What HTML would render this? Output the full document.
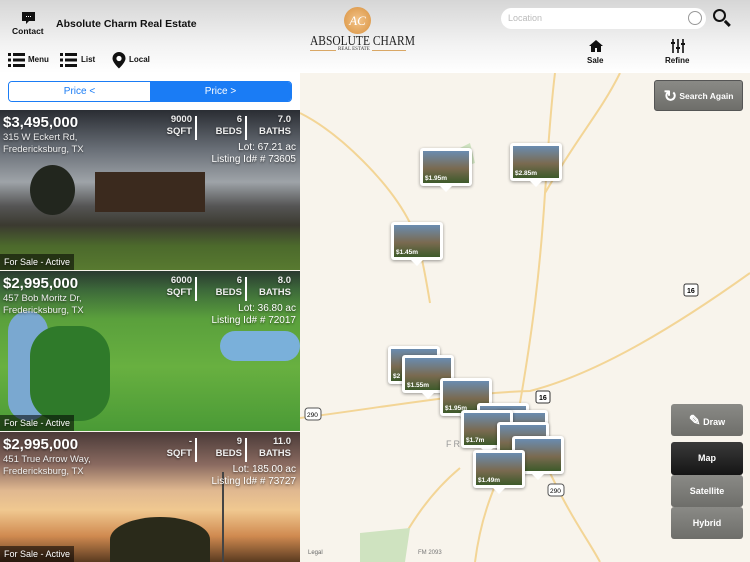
<!DOCTYPE html>
<html><head><meta charset="utf-8"><style>
*{margin:0;padding:0;box-sizing:border-box}
body{width:750px;height:562px;overflow:hidden;position:relative;font-family:"Liberation Sans",sans-serif;background:#f8f4ec}
.hdr{position:absolute;left:0;top:0;width:750px;height:73px;background:linear-gradient(#d6d6d6,#f2f2f2 60%,#fff)}
.lp{position:absolute;left:0;top:73px;width:300px;height:37px;background:#fff}
.b{font-weight:bold;color:#111}
.seg{position:absolute;left:8px;top:81px;width:284px;height:21px;border:1px solid #1a7cf5;border-radius:4px;overflow:hidden;display:flex;font-size:10px}
.seg div{flex:1;text-align:center;line-height:19px}
.card{position:absolute;left:0;width:300px;color:#fff;overflow:hidden;text-shadow:0 1px 2px rgba(0,0,0,.6)}
.price{position:absolute;left:3px;top:4px;font-size:15px;font-weight:bold}
.addr{position:absolute;left:3px;top:22px;font-size:9.5px;line-height:12px;color:#eee}
.st{position:absolute;top:4px;font-size:9.5px;font-weight:bold;text-align:right;line-height:12px;color:#eee}
.sep{position:absolute;top:6px;width:2px;height:24px;background:#fff}
.lot{position:absolute;right:4px;top:32px;font-size:10px;text-align:right;line-height:12px}
.tag{position:absolute;left:0;bottom:0;background:rgba(0,0,0,.55);font-size:9px;padding:3px 4px;color:#fff}
.pin{position:absolute;width:52px;height:38px;background:#fff;border-radius:3px;box-shadow:0 1px 3px rgba(0,0,0,.4);padding:3px}
.pin i{display:block;width:46px;height:32px;background:linear-gradient(#6a8cb0,#7a6a50 55%,#3d5a2a);position:relative;font-style:normal}
.pin b{position:absolute;left:2px;bottom:1px;font-size:6.5px;color:#fff}
.pin:after{content:"";position:absolute;left:20px;bottom:-6px;border:6px solid transparent;border-top-color:#fff;border-bottom:0}
.btn{position:absolute;left:671px;width:72px;background:linear-gradient(#8a8a86,#6e6e6a);color:#fff;font-size:9px;font-weight:bold;text-align:center;border-radius:3px}
.lbl{position:absolute;font-size:8px;font-weight:bold;color:#111}
</style></head><body>
<svg style="position:absolute;left:300px;top:73px" width="450" height="489">
<g fill="none" stroke="#f3d596" stroke-width="2">
<path d="M255 0 C250 40 248 80 245 120 C240 200 232 260 220 330"/>
<path d="M0 345 C80 335 160 320 230 318 C300 300 380 250 450 200"/>
<path d="M0 40 C40 60 90 110 110 150 C120 170 125 200 130 230"/>
<path d="M220 330 C225 360 240 380 250 400 L260 420 C275 450 290 470 300 489"/>
<path d="M210 380 C190 420 180 450 175 489"/>
<path d="M90 489 C110 450 130 420 160 395"/>
<path d="M320 0 C300 40 280 60 245 120"/>
</g>
<path d="M150 80 L170 70 L175 90 L160 95Z" fill="#cfe3c0"/>
<path d="M60 460 L110 455 L105 489 L60 489Z" fill="#cfe3c0"/>
<text x="146" y="374" font-size="9" fill="#999" font-family="Liberation Sans" letter-spacing="2">FRE</text>
<text x="118" y="481" font-size="6" fill="#777" font-family="Liberation Sans">FM 2093</text>
<text x="8" y="481" font-size="6" fill="#666" font-family="Liberation Sans">Legal</text>
<rect x="384" y="211" width="14" height="12" rx="2" fill="#fff" stroke="#333"/><text x="387" y="220" font-size="7" font-weight="bold" font-family="Liberation Sans">16</text>
<rect x="236" y="318" width="14" height="12" rx="2" fill="#fff" stroke="#333"/><text x="239" y="327" font-size="7" font-weight="bold" font-family="Liberation Sans">16</text>
<rect x="5" y="335" width="16" height="12" rx="3" fill="#fff" stroke="#555"/><text x="7" y="344" font-size="6.5" font-family="Liberation Sans">290</text>
<rect x="248" y="411" width="16" height="12" rx="3" fill="#fff" stroke="#555"/><text x="250" y="420" font-size="6.5" font-family="Liberation Sans">290</text>
</svg>
<div class="hdr"></div>
<div class="lp"></div>
<svg style="position:absolute;left:21px;top:11px" width="16" height="14"><path d="M1 1h13v9H8l-3 3v-3H1z" fill="#111"/><path d="M5 5.5h1M7 5.5h1M9 5.5h1" stroke="#fff"/></svg>
<div class="b" style="position:absolute;left:12px;top:26px;font-size:8.5px">Contact</div>
<div class="b" style="position:absolute;left:56px;top:18px;font-size:10.5px">Absolute Charm Real Estate</div>
<svg style="position:absolute;left:7px;top:51px" width="120" height="18">
<g fill="#111"><rect x="1" y="2" width="3" height="3"/><rect x="6" y="2" width="12" height="3"/><rect x="1" y="7.5" width="3" height="3"/><rect x="6" y="7.5" width="12" height="3"/><rect x="1" y="13" width="3" height="3"/><rect x="6" y="13" width="12" height="3"/>
<rect x="53" y="2" width="3" height="3"/><rect x="58" y="2" width="12" height="3"/><rect x="53" y="7.5" width="3" height="3"/><rect x="58" y="7.5" width="12" height="3"/><rect x="53" y="13" width="3" height="3"/><rect x="58" y="13" width="12" height="3"/>
<path d="M112 1a6.5 6.5 0 0 1 6.5 6.5c0 4-6.5 10-6.5 10s-6.5-6-6.5-10A6.5 6.5 0 0 1 112 1z"/></g>
<circle cx="112" cy="7.5" r="2.6" fill="#fff"/></svg>
<div class="lbl" style="left:28px;top:55px">Menu</div>
<div class="lbl" style="left:81px;top:55px">List</div>
<div class="lbl" style="left:129px;top:55px">Local</div>
<div style="position:absolute;left:344px;top:7px;width:27px;height:27px;border-radius:50%;background:radial-gradient(#f3c48a,#d8913e);color:#fff;font:italic 13px 'Liberation Serif',serif;text-align:center;line-height:27px">AC</div>
<div style="position:absolute;left:310px;top:34px;font:14px 'Liberation Serif',serif;color:#222;transform:scaleX(0.82);transform-origin:left">ABSOLUTE CHARM</div>
<div style="position:absolute;left:310px;top:50px;width:96px;height:1px;background:#d9a765"></div>
<div style="position:absolute;left:336px;top:47px;font:5px 'Liberation Serif',serif;color:#333;background:#f6f6f6;padding:0 2px">REAL ESTATE</div>
<div style="position:absolute;left:501px;top:8px;width:205px;height:21px;background:#fff;border-radius:11px;font-size:9px;color:#bbb;padding:5px 7px">Location<span style="position:absolute;right:4px;top:3px;width:14px;height:14px;border:1.5px solid #999;border-radius:50%"></span></div>
<div style="position:absolute;left:713px;top:9px;width:13px;height:13px;border:2px solid #111;border-radius:50%"></div>
<div style="position:absolute;left:724px;top:22px;width:7px;height:2.5px;background:#111;transform:rotate(45deg)"></div>
<svg style="position:absolute;left:589px;top:40px" width="14" height="12"><path d="M7 0L0 6h2v6h4V8h2v4h4V6h2z" fill="#111"/></svg>
<div class="lbl" style="left:587px;top:56px">Sale</div>
<svg style="position:absolute;left:670px;top:39px" width="16" height="14" stroke="#111" stroke-width="1.6"><path d="M3 0v14M8 0v14M13 0v14"/><path d="M1 4h4M6 9h4M11 5h4" stroke-width="2"/></svg>
<div class="lbl" style="left:665px;top:56px">Refine</div>
<div class="seg"><div style="background:#fff;color:#1a7cf5">Price &lt;</div><div style="background:#1a7cf5;color:#fff">Price &gt;</div></div>

<div class="card" style="top:110px;height:160px;background:linear-gradient(#2a2d33,#6a7078 25%,#9ea3a8 45%,#555 60%,#3b3a30 72%,#4c6a2c 85%,#587a30)">
<div style="position:absolute;left:95px;top:62px;width:110px;height:40px;background:#3b2a1e"></div>
<div style="position:absolute;left:30px;top:55px;width:45px;height:50px;border-radius:50%;background:#22261e"></div>
<div class="price">$3,495,000</div><div class="addr">315 W Eckert Rd,<br>Fredericksburg, TX</div>
<div class="st" style="left:160px;width:32px">9000<br>SQFT</div><div class="sep" style="left:195px"></div>
<div class="st" style="left:210px;width:32px">6<br>BEDS</div><div class="sep" style="left:245px"></div>
<div class="st" style="left:255px;width:36px">7.0<br>BATHS</div>
<div class="lot">Lot: 67.21 ac<br>Listing Id# # 73605</div>
<div class="tag">For Sale - Active</div></div>

<div class="card" style="top:271px;height:160px;background:linear-gradient(#2a3a30,#3d6a3a 12%,#5aa03c 30%,#68b040 60%,#4a9a36)">
<div style="position:absolute;left:8px;top:40px;width:40px;height:110px;background:#7aa8d0;border-radius:20px"></div>
<div style="position:absolute;left:30px;top:55px;width:80px;height:95px;background:#2f7a2a;border-radius:30px"></div>
<div style="position:absolute;left:220px;top:60px;width:80px;height:30px;background:#7ab0da;border-radius:15px"></div>
<div class="price">$2,995,000</div><div class="addr">457 Bob Moritz Dr,<br>Fredericksburg, TX</div>
<div class="st" style="left:160px;width:32px">6000<br>SQFT</div><div class="sep" style="left:195px"></div>
<div class="st" style="left:210px;width:32px">6<br>BEDS</div><div class="sep" style="left:245px"></div>
<div class="st" style="left:255px;width:36px">8.0<br>BATHS</div>
<div class="lot">Lot: 36.80 ac<br>Listing Id# # 72017</div>
<div class="tag">For Sale - Active</div></div>

<div class="card" style="top:432px;height:130px;background:linear-gradient(#4a3a38,#8a6a60 25%,#e0b890 45%,#f0c890 60%,#d08a50 80%,#5a3a20)">
<div style="position:absolute;left:110px;top:85px;width:100px;height:45px;background:#2a2a1a;border-radius:50% 50% 0 0"></div>
<div style="position:absolute;left:222px;top:40px;width:2px;height:90px;background:#444"></div>
<div class="price">$2,995,000</div><div class="addr">451 True Arrow Way,<br>Fredericksburg, TX</div>
<div class="st" style="left:160px;width:32px">-<br>SQFT</div><div class="sep" style="left:195px"></div>
<div class="st" style="left:210px;width:32px">9<br>BEDS</div><div class="sep" style="left:245px"></div>
<div class="st" style="left:255px;width:36px">11.0<br>BATHS</div>
<div class="lot">Lot: 185.00 ac<br>Listing Id# # 73727</div>
<div class="tag">For Sale - Active</div></div>

<div class="btn" style="left:654px;top:80px;width:89px;height:31px;line-height:31px;font-size:8.5px;border:1px solid #555"><span style="font-size:16px;vertical-align:middle">↻</span> Search Again</div>
<div class="pin" style="left:420px;top:148px"><i><b>$1.95m</b></i></div>
<div class="pin" style="left:510px;top:143px"><i><b>$2.85m</b></i></div>
<div class="pin" style="left:391px;top:222px"><i><b>$1.45m</b></i></div>
<div class="pin" style="left:388px;top:346px"><i><b>$2</b></i></div>
<div class="pin" style="left:402px;top:355px"><i><b>$1.55m</b></i></div>
<div class="pin" style="left:440px;top:378px"><i><b>$1.95m</b></i></div>
<div class="pin" style="left:477px;top:403px"><i></i></div>
<div class="pin" style="left:496px;top:410px"><i></i></div>
<div class="pin" style="left:461px;top:410px"><i><b>$1.7m</b></i></div>
<div class="pin" style="left:497px;top:422px"><i></i></div>
<div class="pin" style="left:512px;top:436px"><i><b>m</b></i></div>
<div class="pin" style="left:473px;top:450px"><i><b>$1.49m</b></i></div>
<div class="btn" style="top:404px;height:32px;line-height:32px"><span style="font-size:14px">✎</span> Draw</div>
<div class="btn" style="top:442px;height:33px;line-height:33px;background:linear-gradient(#3a3a3a,#151515)">Map</div>
<div class="btn" style="top:475px;height:32px;line-height:32px">Satellite</div>
<div class="btn" style="top:507px;height:32px;line-height:32px">Hybrid</div>
</body></html>
